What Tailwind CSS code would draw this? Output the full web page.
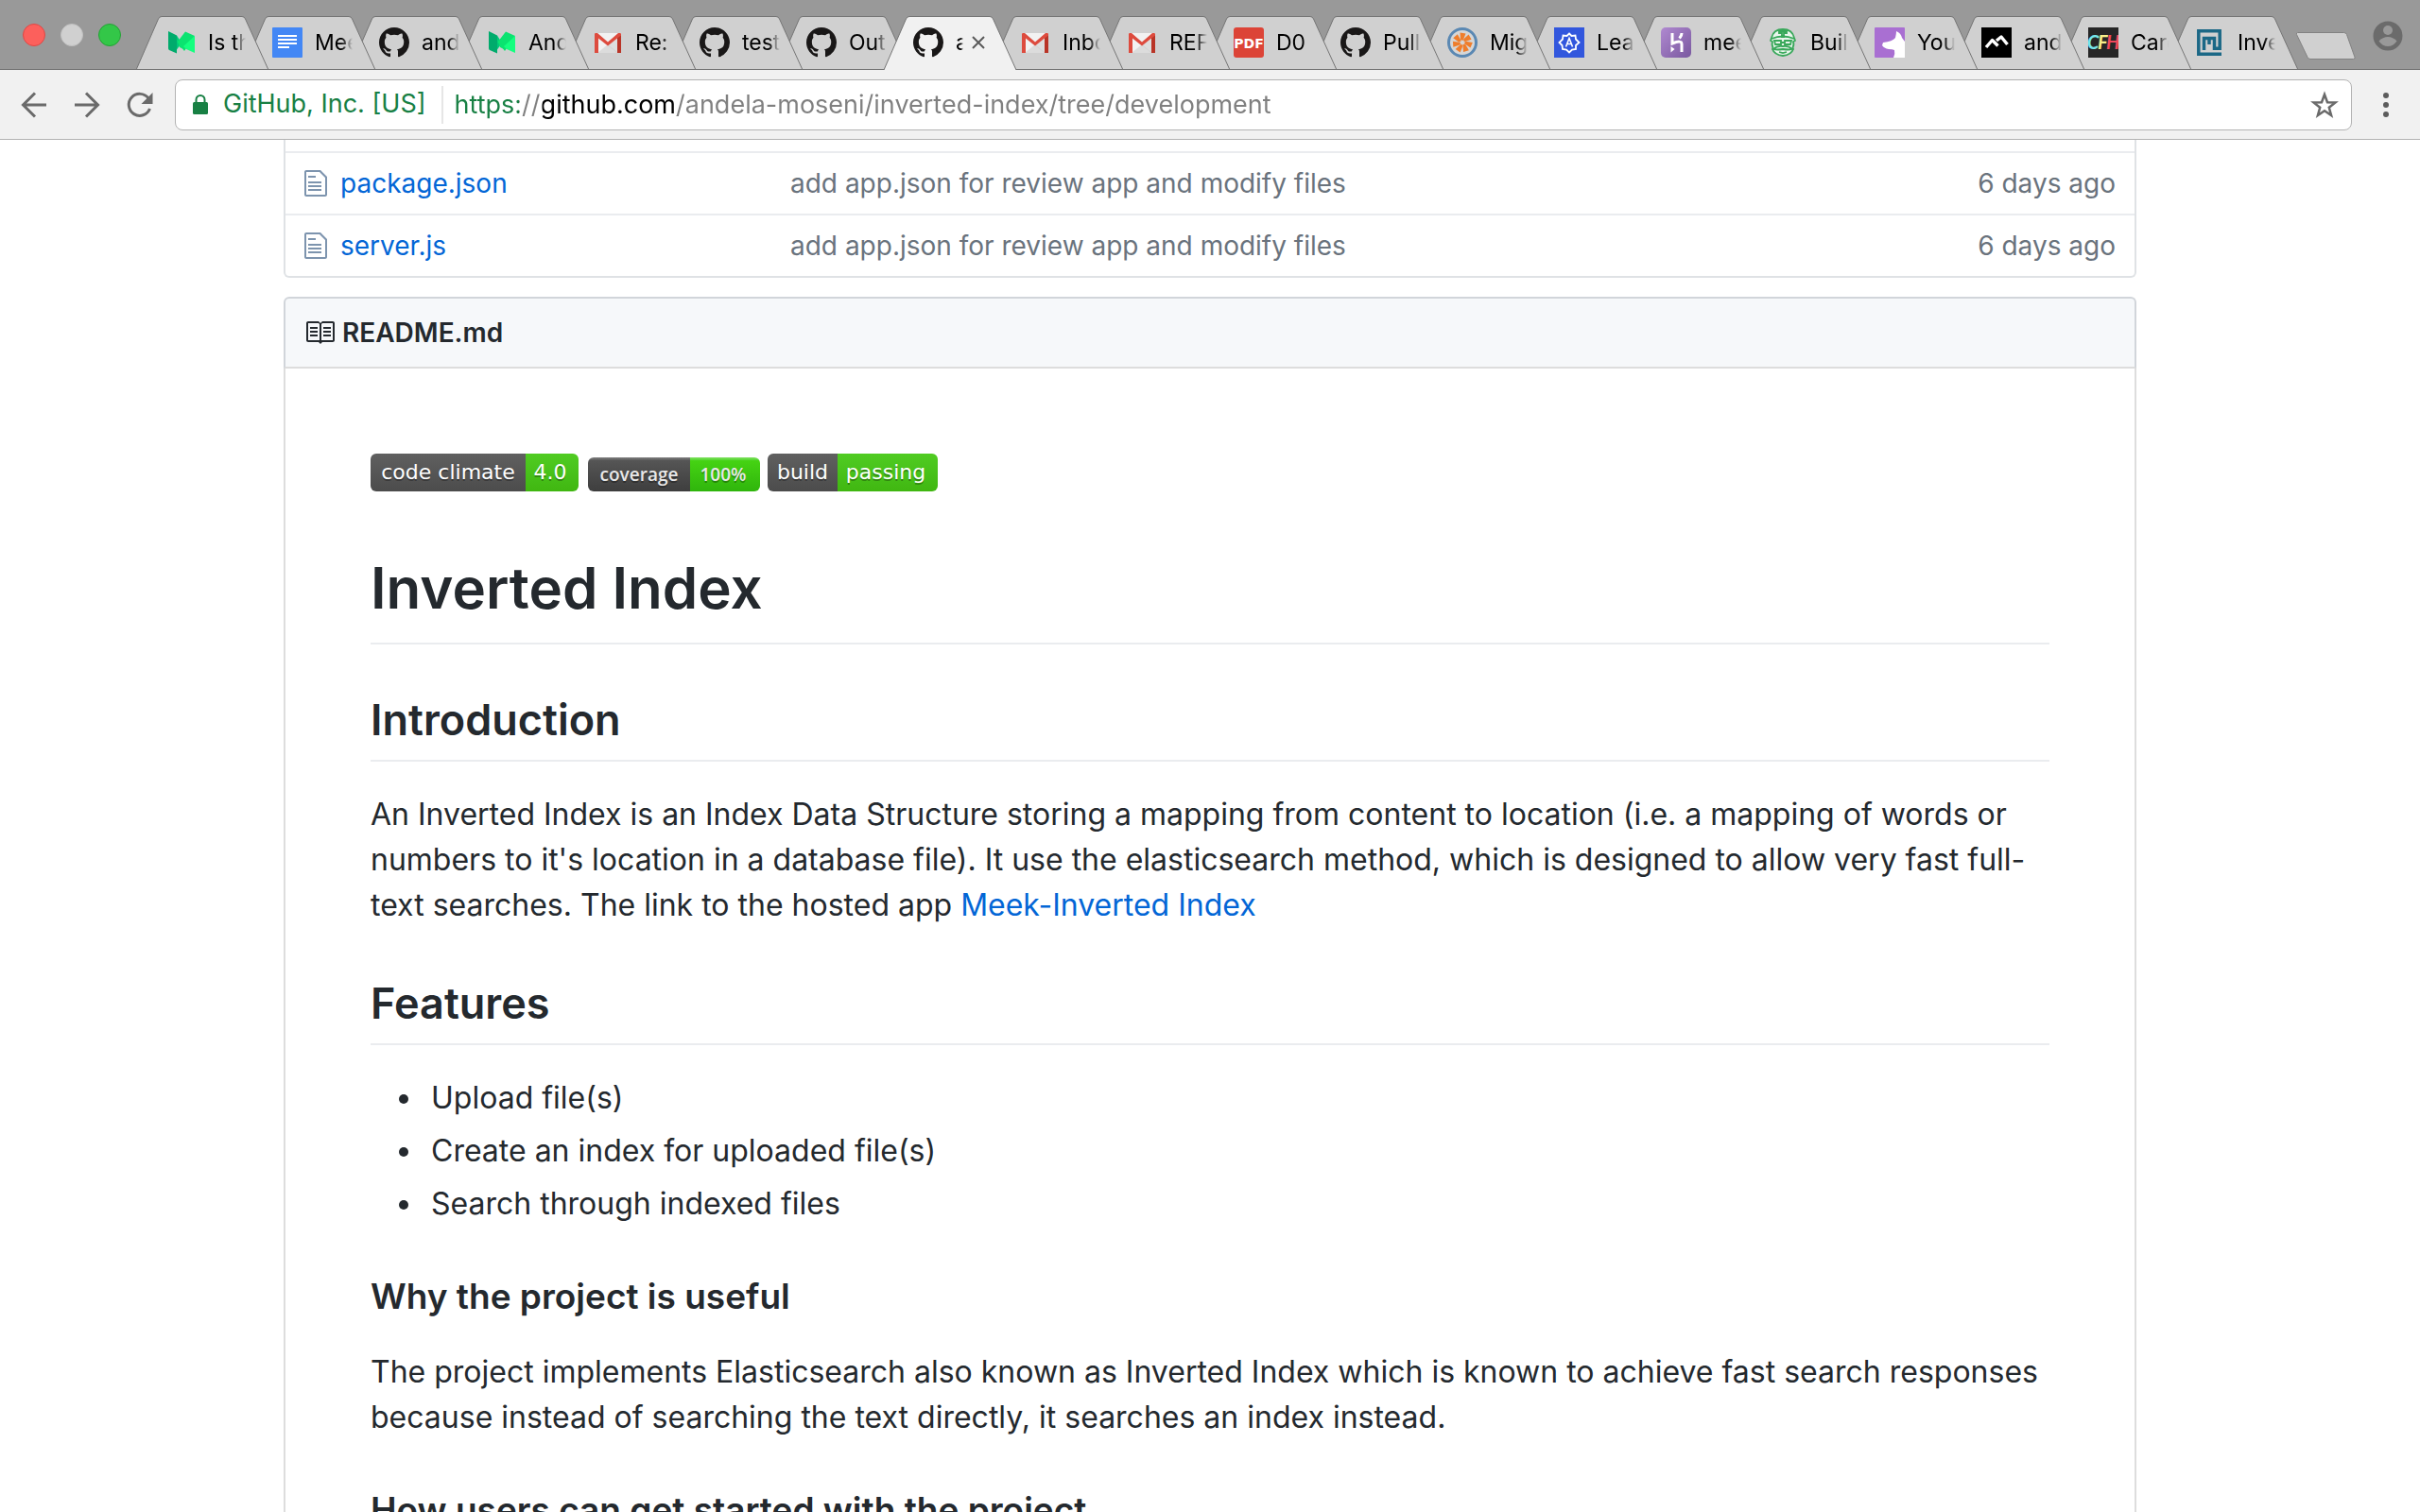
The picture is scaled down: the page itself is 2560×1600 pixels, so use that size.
<!DOCTYPE html>
<html lang="en">
<head>
<meta charset="utf-8">
<title>andela-moseni/inverted-index at development</title>
<script src="https://cdn.jsdelivr.net/npm/@tailwindcss/browser@4"></script>
</head>
<body class="flex h-screen flex-col overflow-hidden bg-white font-['Inter',sans-serif] text-[#24292e]">

<!-- Favicons -->
<svg class="absolute size-0" aria-hidden="true">
  <defs>
    <linearGradient id="purple" x1="0" y1="0" x2="1" y2="1"><stop offset="0" stop-color="#b089d0"/><stop offset="1" stop-color="#79589f"/></linearGradient>
  </defs>
  <symbol id="medium" viewBox="0 0 32 32"><path fill="#00ab6c" d="M3 4l9 4.500v19L4 24q-1-.5-1-2z"/><path fill="#00c97c" d="M12 8.500l5 8-5 7z"/><path fill="#0be370" d="M12.500 15.500L21 4.500 31 9l-11 16z"/><path fill="#14ff7f" d="M31 9v18l-9-4-3-3z"/><path fill="#0be370" d="M12 12l9 12-6-3z"/></symbol>
  <symbol id="docs" viewBox="0 0 32 32"><rect width="32" height="32" rx="1" fill="#4387f5"/><path d="M6 8h20v2H6zm0 4h20v2H6zm0 4h20v2H6zm0 4h12v2H6z" fill="#fff"/></symbol>
  <symbol id="github" viewBox="0 0 16 16"><path fill="#191717" d="M8 0C3.580 0 0 3.580 0 8c0 3.540 2.290 6.530 5.470 7.590.4.070.55-.17.55-.38 0-.19-.01-.82-.01-1.490-2.010.37-2.530-.49-2.690-.94-.09-.23-.48-.94-.82-1.130-.28-.15-.68-.52-.01-.53.63-.01 1.080.58 1.230.82.72 1.210 1.870.87 2.330.66.070-.52.28-.87.51-1.070-1.780-.2-3.640-.89-3.640-3.950 0-.87.31-1.590.82-2.150-.08-.2-.36-1.020.08-2.120 0 0 .67-.21 2.200.82.64-.18 1.320-.27 2-.27s1.360.09 2 .27c1.530-1.040 2.200-.82 2.200-.82.44 1.100.16 1.920.08 2.120.51.56.82 1.270.82 2.150 0 3.070-1.870 3.750-3.650 3.950.29.25.54.73.54 1.480 0 1.070-.01 1.930-.01 2.200 0 .21.15.46.55.38A8.013 8.013 0 0016 8c0-4.420-3.580-8-8-8z"/></symbol>
  <symbol id="gmail" viewBox="0 0 32 32"><path fill="#f2f2f2" d="M2 6h28v21H2z"/><path fill="#dcdcdc" d="M5 27l11-9 11 9z"/><path fill="#c9c9c9" d="M30 9L16 19l10 8h4z" opacity=".5"/><path fill="#dd4b3e" d="M2 27V7q0-1 1-1h2l11 9.500L27 6h2q1 0 1 1v20h-4V11.500l-10 8-10-8V27z"/><path fill="#b93427" d="M26 11.500l4-3V27h-4z"/></symbol>
  <symbol id="pdf" viewBox="0 0 32 32"><rect width="32" height="32" rx="3" fill="#dc4437"/><text x="16" y="21.500" text-anchor="middle" font-family="DejaVu Sans, sans-serif" font-weight="700" font-size="14" fill="#fff">PDF</text></symbol>
  <symbol id="flower" viewBox="0 0 32 32"><circle cx="16" cy="16" r="14.500" fill="#d6d6d6" stroke="#5a88b3" stroke-width="3"/><g fill="#ef7d2b"><path id="petal" d="M14 13l-.5-7.500 6 1L16.500 14z"/><use href="#petal" transform="rotate(51 16 16)"/><use href="#petal" transform="rotate(103 16 16)"/><use href="#petal" transform="rotate(154 16 16)"/><use href="#petal" transform="rotate(206 16 16)"/><use href="#petal" transform="rotate(257 16 16)"/><use href="#petal" transform="rotate(309 16 16)"/></g></symbol>
  <symbol id="badge" viewBox="0 0 32 32"><rect width="32" height="32" fill="#3257dd"/><path fill="none" stroke="#fff" stroke-width="1.800" d="M16 6.500l2.500 2.500 4-.5.5 4 3.500 3.500-3.500 3 0 4-4 .5-3 3-3-3-4-.5-.5-4-3-3 3.500-3.500.5-4 4 .5z"/><path fill="none" stroke="#fff" stroke-width="1.600" d="M12.500 20.500L16 11.500l3.500 9m-6-3h5"/></symbol>
  <symbol id="heroku" viewBox="0 0 32 32"><rect width="32" height="32" rx="5" fill="url(#purple)"/><path fill="none" stroke="#fff" stroke-width="3" d="M12 6v11q10-4 10 0.500V26M22 6q0 3-2.500 5.500"/><path fill="#fff" d="M10.500 20l4 3-4 3.500z"/></symbol>
  <symbol id="travis" viewBox="0 0 32 32"><path fill="#e9f5ec" stroke="#39a85a" stroke-width="1.800" stroke-linejoin="round" d="M4 11Q6 2 16 2t12 9l1 3-2 1q1 4-.5 6l.5 2q-2 6-11 7-9-1-11-7l.5-2Q4 19 5 15l-2-1z"/><path fill="none" stroke="#39a85a" stroke-width="1.800" d="M4 12q12-5 24 0M12 4h8v2h-3v4h-2V6h-3zM7 14h7v4H8zm11 0h7l-1 4h-6zM14 16h4M6 23q4-4 10-3 6-1 10 3-4 1-10 0-6 1-10 0zM12 26l4 1 4-1"/></symbol>
  <symbol id="dog" viewBox="0 0 32 32"><rect width="32" height="32" rx="1" fill="#a96fd2"/><path fill="#fff" d="M23 4q5 2 6 7l3 4v17H20q2-4 1-8-2-1-6-1-5-1-7-4l1-3q10-1 13-5 1-4 1-7z"/></symbol>
  <symbol id="peaks" viewBox="0 0 32 32"><rect width="32" height="32"/><path fill="none" stroke="#fff" stroke-width="3.400" stroke-linejoin="round" d="M5 21l6.500-7.500 6 6M16 14l5-4 6.500 8"/></symbol>
  <symbol id="cfh" viewBox="0 0 32 32"><rect width="32" height="32" fill="#262626"/><g font-family="Lato, sans-serif" font-style="italic" font-weight="700" font-size="20"><text x="-1" y="23" fill="#75e6ea">C</text><text x="10" y="23" fill="#f7ef8a">F</text><text x="19" y="23" fill="#f0485c">H</text></g></symbol>
  <symbol id="maze" viewBox="0 0 32 32"><path fill="none" stroke="#1b6886" stroke-width="3.500" d="M28 28.200H3.800V3.800h22.400v18.500H20.500V11.500H9.500V24M15 11v7"/></symbol>
</svg>

<header class="shrink-0">
  <!-- Tab strip -->
  <div class="flex h-[74px] items-end bg-[#999] shadow-[inset_0_-1px_0_#6f6f6f]">
    <div class="flex h-full w-[144px] shrink-0 items-center gap-4 pl-6">
      <button aria-label="Close window" class="size-6 rounded-full border border-[#df4744] bg-[#fc605c]"></button>
      <button aria-label="Minimise window" class="size-6 rounded-full border border-[#c0c0c0] bg-[#d0d0d0]"></button>
      <button aria-label="Zoom window" class="size-6 rounded-full border border-[#24a235] bg-[#33c748]"></button>
    </div>
    <nav id="tabs" aria-label="Tabs" class="isolate flex pr-[27px]"></nav>
    <button aria-label="New tab" class="mb-[9px] -ml-1 h-8 w-[66px] shrink-0">
      <svg viewBox="0 0 66 32" class="h-8 w-[66px]"><path d="M3.500 1.500h49q2 0 3 2l8.500 24q.5 2-1.500 2H17q-2 0-3-2l-11.500-24q-.5-2 1-2z" fill="#d0d0d0" stroke="#828282"/></svg>
    </button>
    <button aria-label="Profile" class="mr-[18px] mb-5 ml-auto size-8 shrink-0">
      <svg viewBox="0 0 32 32"><circle cx="16" cy="16" r="15.500" fill="#6b6b6b"/><circle cx="16" cy="10" r="5" fill="#999"/><path fill="#999" d="M6.500 21.500q4-4.500 9.500-4.500t9.500 4.500q-4 5.500-9.500 5.500t-9.500-5.500z"/></svg>
    </button>
  </div>

  <!-- Toolbar -->
  <div class="flex h-[74px] items-center border-b border-[#b3b3b3] bg-[#f1f1f1] pl-5 text-[#6a6a6a]">
    <button aria-label="Back" class="mr-6 size-8"><svg viewBox="0 0 32 32" fill="none" stroke="currentColor" stroke-width="3"><path d="M29 16H5M17 3.500L4.500 16 17 28.500"/></svg></button>
    <button aria-label="Forward" class="mr-6 size-8"><svg viewBox="0 0 32 32" fill="none" stroke="currentColor" stroke-width="3"><path d="M3 16h24M15 3.500L27.500 16 15 28.500"/></svg></button>
    <button aria-label="Reload" class="mr-[21px] size-8"><svg viewBox="0 0 32 32"><path fill="none" stroke="currentColor" stroke-width="3" d="M26.500 20A11.500 11.500 0 1 1 25 9"/><path fill="currentColor" d="M29.500 3v12h-12z"/></svg></button>
    <div class="flex h-[54px] flex-1 items-center rounded-lg border border-[#b3b3b3] bg-white pl-[17px] text-[27px]">
      <svg viewBox="0 0 18 24" class="h-6 w-[18px] text-[#188044]"><rect x="1" y="9" width="16" height="13" rx="1.500" fill="currentColor"/><path d="M4.500 10V6.500a4.500 4.500 0 0 1 9 0V10" fill="none" stroke="currentColor" stroke-width="2"/></svg>
      <span class="ml-[15px] whitespace-nowrap text-[#188044]">GitHub, Inc. [US]</span>
      <span class="mr-3 ml-4 h-10 w-[2px] bg-[#e6e6e6]"></span>
      <input aria-label="Address" value="https://github.com/andela-moseni/inverted-index/tree/development" class="h-12 min-w-0 flex-1 bg-[linear-gradient(to_right,#188044_68px,#808080_68px_93px,#000_93px_235px,#808080_235px)] bg-clip-text text-transparent outline-none">
      <button aria-label="Bookmark this page" class="mr-3 size-8"><svg viewBox="0 0 32 32" fill="none" stroke="currentColor" stroke-width="2.500"><path d="M16 5l3 8.200 8.500.3-6.700 5.300 2.300 8.300L16 22.300l-7.100 4.800 2.300-8.300-6.700-5.300 8.500-.3z"/></svg></button>
    </div>
    <button aria-label="Menu" class="mx-5 size-8"><svg viewBox="0 0 32 32" fill="#5c5c5c"><circle cx="16" cy="6" r="3"/><circle cx="16" cy="16" r="3"/><circle cx="16" cy="26" r="3"/></svg></button>
  </div>
</header>

<main class="min-h-0 flex-1 overflow-hidden">
  <div class="mx-auto w-full max-w-[1960px]">
    <!-- File list, scrolled to its last rows -->
    <div class="rounded-b-md border-2 border-t-0 border-[#dfe2e5] pt-3">
      <table class="w-full table-fixed border-separate border-spacing-0 text-[28px] leading-10 text-[#6a737d]">
        <tbody>
          <tr>
            <td class="h-[66px] w-[514px] border-t-2 border-[#eaecef] pl-5"><a href="#" class="flex items-center gap-[14px] text-[#0366d6]"><svg viewBox="0 0 12 16" class="h-8 w-6 text-[#7d94ae]" fill="currentColor"><path d="M6 5H2V4h4v1zM2 8h7V7H2v1zm0 2h7V9H2v1zm0 2h7v-1H2v1zm10-7.500V14c0 .55-.45 1-1 1H1c-.55 0-1-.45-1-1V2c0-.55.45-1 1-1h7.500L12 4.500zM11 5L8 2H1v12h10V5z"/></svg>package.json</a></td>
            <td class="border-t-2 border-[#eaecef] pl-5">add app.json for review app and modify files</td>
            <td class="w-[300px] border-t-2 border-[#eaecef] pr-5 text-right">6 days ago</td>
          </tr>
          <tr>
            <td class="h-[66px] border-t-2 border-[#eaecef] pl-5"><a href="#" class="flex items-center gap-[14px] text-[#0366d6]"><svg viewBox="0 0 12 16" class="h-8 w-6 text-[#7d94ae]" fill="currentColor"><path d="M6 5H2V4h4v1zM2 8h7V7H2v1zm0 2h7V9H2v1zm0 2h7v-1H2v1zm10-7.500V14c0 .55-.45 1-1 1H1c-.55 0-1-.45-1-1V2c0-.55.45-1 1-1h7.500L12 4.500zM11 5L8 2H1v12h10V5z"/></svg>server.js</a></td>
            <td class="border-t-2 border-[#eaecef] pl-5">add app.json for review app and modify files</td>
            <td class="border-t-2 border-[#eaecef] pr-5 text-right">6 days ago</td>
          </tr>
        </tbody>
      </table>
    </div>

    <!-- Readme -->
    <section class="mt-5">
      <h3 class="flex h-[76px] items-center gap-2 rounded-t-md border-2 border-[#d1d5da] border-b-[#ddd] bg-[#f6f8fa] px-5 text-[28px] font-semibold">
        <svg viewBox="0 0 16 16" class="size-8" fill="currentColor"><path d="M3 5h4v1H3V5zm0 3h4V7H3v1zm0 2h4V9H3v1zm11-5h-4v1h4V5zm0 2h-4v1h4V7zm0 2h-4v1h4V9zm2-6v9c0 .55-.45 1-1 1H9.500l-1 1-1-1H2c-.55 0-1-.45-1-1V3c0-.55.45-1 1-1h5.500l1 1 1-1H15c.55 0 1 .45 1 1zm-8 .5L7.500 3H2v9h6V3.500zm7-.5H9.500l-.5.5V12h6V3z"/></svg>
        README.md
      </h3>
      <article class="border-2 border-t-0 border-[#ddd] p-[90px] text-[32px] leading-[48px]">
        <div class="flex h-10 items-end font-['DejaVu_Sans',sans-serif] text-[22px] leading-10 text-white">
          <a href="#" class="mr-[10px] flex h-10 overflow-hidden rounded-md text-center text-shadow-[0_2px_0_#0000004d]">
            <span class="w-[164px] bg-linear-to-b from-[#606060] to-[#4c4c4c]">code climate</span>
            <span class="w-14 bg-linear-to-b from-[#50cc22] to-[#40b711] pr-1">4.0</span>
          </a>
          <a href="#" class="mr-2 flex h-9 overflow-hidden rounded-md text-center font-['Open_Sans',sans-serif] text-[19px] leading-9 font-semibold text-[#e8e8e8] text-shadow-[0_2px_0_#0000004d]">
            <span class="w-[108px] bg-linear-to-b from-[#808080] from-0% via-[#555] via-10% to-[#3e3e3e]">coverage</span>
            <span class="w-[74px] bg-linear-to-b from-[#7fe05f] from-0% via-[#45d313] via-10% to-[#2fb50c] pr-1">100%</span>
          </a>
          <a href="#" class="flex h-10 overflow-hidden rounded-md text-center text-shadow-[0_2px_0_#0000004d]">
            <span class="w-[74px] bg-linear-to-b from-[#606060] to-[#4c4c4c]">build</span>
            <span class="w-[106px] bg-linear-to-b from-[#50cc22] to-[#40b711] pr-1">passing</span>
          </a>
        </div>
        <h1 class="mt-14 mb-12 border-b-2 border-[#eaecef] pb-3 text-[60px] leading-[92px] font-semibold">Inverted Index</h1>
        <h2 class="mb-8 border-b-2 border-[#eaecef] pb-[10px] text-[45px] leading-[64px] font-semibold">Introduction</h2>
        <p>An Inverted Index is an Index Data Structure storing a mapping from content to location (i.e. a mapping of words or numbers to it's location in a database file). It use the elasticsearch method, which is designed to allow very fast full-text searches. The link to the hosted app <a href="#" class="text-[#0366d6]">Meek-Inverted Index</a></p>
        <h2 class="mt-12 mb-8 border-b-2 border-[#eaecef] pb-[10px] text-[45px] leading-[64px] font-semibold">Features</h2>
        <ul class="space-y-2 pl-16">
          <li class="relative before:absolute before:top-5 before:-left-[34px] before:size-[10px] before:rounded-full before:bg-current">Upload file(s)</li>
          <li class="relative before:absolute before:top-5 before:-left-[34px] before:size-[10px] before:rounded-full before:bg-current">Create an index for uploaded file(s)</li>
          <li class="relative before:absolute before:top-5 before:-left-[34px] before:size-[10px] before:rounded-full before:bg-current">Search through indexed files</li>
        </ul>
        <h3 class="mt-12 mb-[30px] text-[37px] leading-[52px] font-semibold">Why the project is useful</h3>
        <p>The project implements Elasticsearch also known as Inverted Index which is known to achieve fast search responses because instead of searching the text directly, it searches an index instead.</p>
        <h3 class="mt-12 mb-[30px] text-[37px] leading-[52px] font-semibold">How users can get started with the project</h3>
      </article>
    </section>
  </div>
</main>

<script>
  const tabs = [
    ['medium', 'Is this'], ['docs', 'Meek'], ['github', 'andela'], ['medium', 'Andela'], ['gmail', 'Re:'],
    ['github', 'tests'], ['github', 'Output'], ['github', 'andela', true], ['gmail', 'Inbox'], ['gmail', 'REF'],
    ['pdf', 'D0'], ['github', 'Pull'], ['flower', 'Migr'], ['badge', 'Learn'], ['heroku', 'meek'],
    ['travis', 'Build'], ['dog', 'Your'], ['peaks', 'andela'], ['cfh', 'Cards'], ['maze', 'Inverted']
  ];
  document.getElementById('tabs').innerHTML = tabs.map(([icon, title, active], i) => `
    <div class="relative -mr-[27px] flex h-[57px] w-[140px] shrink-0 items-center pb-[2px] pl-[31px]" style="z-index:${active ? 50 : tabs.length - i}">
      <svg viewBox="0 0 140 57" class="absolute inset-0 h-[57px] w-[140px]">
        <path d="M0 57L23.500 3Q24.500 .5 27 .5H112Q114.500 .5 115.500 3L140 57Z" fill="${active ? '#f1f1f1' : '#d0d0d0'}"/>
        <path d="M0 57L23.500 3Q24.500 .5 27 .5H112Q114.500 .5 115.500 3L140 57" fill="none" stroke="#757575"/>
        ${active ? '' : '<path d="M0 56.500H140" stroke="#6f6f6f"/>'}
      </svg>
      <svg class="relative size-8 shrink-0" aria-hidden="true"><use href="#${icon}"/></svg>
      <a href="#" class="${active ? 'w-2' : 'w-10'} relative ml-[13px] overflow-hidden text-[23px] leading-8 whitespace-nowrap text-black [mask-image:linear-gradient(to_right,black_70%,transparent)]">${title}</a>
      ${active ? '<button aria-label="Close tab" class="relative ml-[8px] size-4 text-[#5a5a5a]"><svg viewBox="0 0 16 16" stroke="currentColor" stroke-width="2"><path d="M2 2l12 12M14 2L2 14"/></svg></button>' : ''}
    </div>`).join('');
</script>
</body>
</html>
